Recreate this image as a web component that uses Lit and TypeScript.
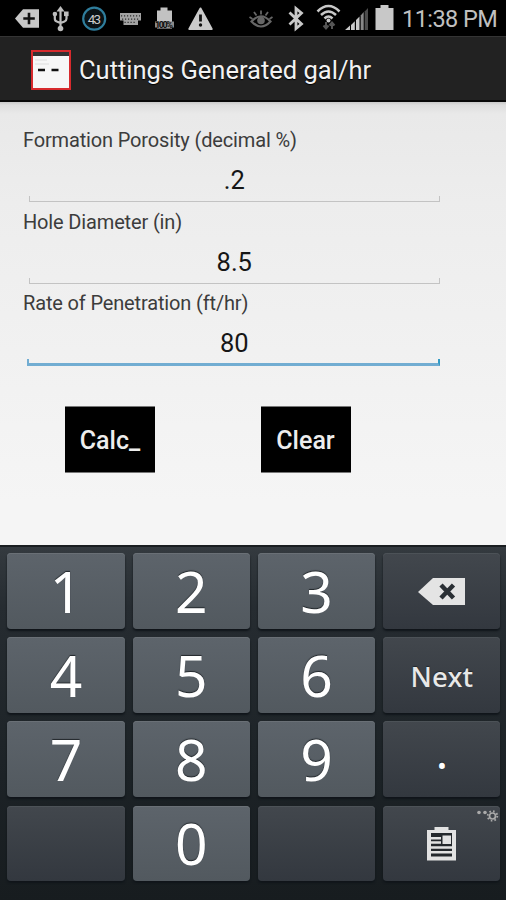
import { LitElement, html, svg, css, nothing } from "lit";
import { customElement, property } from "lit/decorators.js";

const shared = css`
  * { box-sizing: border-box; }
  svg { display: block; flex: none; overflow: visible; }
`;

@customElement("status-bar")
class StatusBar extends LitElement {
  static styles = [shared, css`
    :host { display: flex; height: 36px; background: #000; color: #c0c0c0; font-family: Roboto, "Liberation Sans", sans-serif; justify-content: space-between; padding: 2px 9px 0 15px; }
    .group { display: flex; }
    .left { gap: 14px; }
    .eye { margin-right: 15px; }
    .bluetooth { margin-right: 13px; }
    .wifi { margin-right: 4px; }
    .signal { margin-right: 6px; }
    .battery { margin-right: 8px; }
    .time { font-size: 23.5px; line-height: 34px; white-space: nowrap; width: 95px; letter-spacing: -0.55px; }
    .num { font: 13.5px Roboto, sans-serif; }
    .tiny { font: bold 9px Roboto, sans-serif; }
  `];
  render() {
    return html`
      <div class="group left">
        <svg width="24" height="32" viewBox="0 2 24 32" fill="#c8c8c8"><path d="M0 18.5 8 9.2H24V27.8H8Z"/><path d="M14 12.8v11.5M8.3 18.5h11.5" stroke="#111" stroke-width="2.6"/></svg>
        <svg width="16" height="32" viewBox="0 2 16 32" fill="none" stroke="#bdbdbd" stroke-width="2.2"><path d="M7.5 9v20M1.8 14v4.500q0 2.500 2 3l3.700 1.500 4-1.500q2-.8 2-3V14"/><path d="M7.500 6 11.500 11.500H3.500Z" fill="#bdbdbd" stroke="none"/><circle cx="7.500" cy="28.500" r="2.800" fill="#bdbdbd" stroke="none"/><circle cx="1.900" cy="14" r="2.300" fill="#bdbdbd" stroke="none"/><path d="M11 11.500h4.600v4.600H11z" fill="#bdbdbd" stroke="none"/></svg>
        <svg width="23" height="32" viewBox="0 2 23 32"><circle cx="11.200" cy="18.700" r="11" fill="#091114" stroke="#2f7d9c" stroke-width="2.200"/><text class="num" x="11.400" y="23.500" text-anchor="middle" textLength="13.500" fill="#c8c8c8">43</text></svg>
        <svg width="21" height="32" viewBox="0 2 21 32"><path d="M0 13h21v7.500h-3v4.500H3.500v-4.500H0z" fill="#a2a2a2"/><path d="M1 15.800h19M2 19.200h17M4.500 22.400h12" stroke="#2c2c2c" stroke-width="1.200" stroke-dasharray="1.200 1.800"/></svg>
        <svg width="19" height="32" viewBox="0 2 19 32"><path d="M5.500 7.500h7v3H17v18H2v-18h3.500z" fill="#c2c2c2"/><path d="M0 21.500h19v6H0z" fill="#8a8a8a"/><text class="tiny" x="0" y="27.800" textLength="18" fill="#111">100%</text></svg>
        <svg width="25" height="32" viewBox="0 2 25 32"><path d="M12.500 8.500 23.700 29H1.300Z" fill="#cacaca" stroke="#cacaca" stroke-width="2" stroke-linejoin="round"/><path d="M12.500 14.500v7" stroke="#111" stroke-width="2.800"/><circle cx="12.500" cy="25" r="1.700" fill="#111"/></svg>
      </div>
      <div class="group right">
        <svg class="eye" width="24" height="32" viewBox="0 2 24 32" fill="none" stroke="#666" stroke-width="2.200"><path d="M2.500 21.500Q12 11 21.500 21.500Q12 31.500 2.500 21.500Z"/><circle cx="12" cy="20.500" r="3.800" fill="#666" stroke="none"/><path d="M12 10.500v4M5 12l2.500 3.500M19 12l-2.500 3.500M.5 17l3 2M23.500 17l-3 2" stroke-width="1.800"/></svg>
        <svg class="bluetooth" width="16" height="32" viewBox="0 2 16 32" fill="none" stroke="#c8c8c8" stroke-width="2.800"><path d="M1.500 12.500 13.500 24 8 28.500V8.500L13.500 13 1.500 24.500"/></svg>
        <svg class="wifi" width="24" height="32" viewBox="0 2 24 32" fill="none" stroke="#c8c8c8" stroke-width="2.500"><path d="M.5 11.500q11-11 22 0M4 15q7.500-7 15 0M7.500 18.500q4-4 8 0"/><circle cx="11.500" cy="20.500" r="2" fill="#c8c8c8" stroke="none"/><path d="M9 22v6M6.500 25.500l2.500 3 2.500-3M15 29v-6M12.500 25.500l2.500-3 2.500 3" stroke="#555" stroke-width="2"/></svg>
        <svg class="signal" width="24" height="32" viewBox="0 2 24 32"><path d="M0 30 5 25.500V30zM6 25l3.800-3.800V30H6zM11 20l3.500-3.500V30H11z" fill="#c8c8c8"/><path d="M15.700 15.500 18.700 12V30h-3z" fill="#888"/><path d="M19.700 11.500l3.300-3.500V30h-3.300z" fill="#4c4c4c"/></svg>
        <svg class="battery" width="19" height="32" viewBox="0 2 19 32"><path d="M5.500 5h8v3H18.500V30H.500V8h5z" fill="#c8c8c8"/></svg>
        <span class="time">11:38 PM</span>
      </div>`;
  }
}

@customElement("form-field")
class FormField extends LitElement {
  @property() label = "";
  @property() value = "";
  @property({ type: Boolean, reflect: true }) active = false;
  static styles = [shared, css`
    :host { display: block; height: 81.7px; font-family: Roboto, "Liberation Sans", sans-serif; }
    .label { height: 28px; line-height: 28px; font-size: 20px; color: #3c3c3c; margin-left: -5.5px; letter-spacing: -0.15px; white-space: nowrap; }
    .box { height: 49px; text-align: center; line-height: 53px; font-size: 25.5px; color: #161616; display: flex; flex-direction: column; }
    .value { height: 42px; }
    .edge { height: 6px; border: 1.5px solid #c3c3c3; border-top: 0; }
    :host([active]) .edge { border: 2px solid #72add2; border-bottom-width: 3px; border-top: 0; border-right-color: #339bc5; height: 8px; margin: 0 0 0 -2px; }
  `];
  render() {
    return html`<div class="label">${this.label}</div>
      <div class="box"><div class="value">${this.value}</div><div class="edge"></div></div>`;
  }
}

const backspace = svg`<path d="M0 14 15 0H47V27H15Z" fill="#e4e4e4"/><path d="M23 7 35.5 20M35.5 7 23 20" stroke="#2b3035" stroke-width="4.5"/>`;
const clipboard = svg`<path d="M0 3H7.5V0H21.5V3H29V33.5H0Z" fill="#e2e2e2"/><path d="M4 6H25V29.5H4Z" fill="#24282c"/><path d="M4 11.3H14M4 15.5H14M4 20.5H25M4 25.3H25" stroke="#e2e2e2" stroke-width="2.6"/><path d="M15.5 8.5H24V17H15.5Z" fill="#e2e2e2"/>`;

@customElement("pad-key")
class PadKey extends LitElement {
  @property() label = "";
  @property({ reflect: true }) kind = "digit";
  static styles = [shared, css`
    :host { display: flex; align-items: center; justify-content: center; position: relative; border-radius: 4px; color: #fff; background: linear-gradient(#5d646b, #52595f); box-shadow: 0 2px 2px #10151a, inset 0 1px 0 #6a7076; font-family: "Noto Sans", sans-serif; font-size: 57px; line-height: 75px; text-shadow: 0 -1px 1px #22272b; }
    :host(:not([kind="digit"])) { background: linear-gradient(#42474d, #33383f); box-shadow: 0 2px 2px #10151a, inset 0 1px 0 #4c5257; }
    .digit { padding-top: 1px; }
    .next { font-size: 27.5px; color: #e8e8e8; font-weight: 500; letter-spacing: .1px; padding-top: 3px; }
    .dot { font-size: 46px; line-height: 58px; padding-bottom: 17px; }
    .bs { margin: 2px 0 0 -1px; }
    .clip { margin-top: 2px; }
    .corner { position: absolute; right: 2px; top: 4px; }
  `];
  render() {
    if (this.kind === "backspace") return html`<svg class="bs" width="47" height="27">${backspace}</svg>`;
    if (this.kind === "clip") return html`<svg class="clip" width="29" height="34">${clipboard}</svg>
      <svg class="corner" width="21" height="12"><g fill="#aaa"><circle cx="2" cy="2.5" r="1.8"/><circle cx="8" cy="2.5" r="1.8"/></g><circle cx="15.5" cy="6" r="3" fill="none" stroke="#aaa" stroke-width="1.7"/><circle cx="15.5" cy="6" r="4.8" fill="none" stroke="#aaa" stroke-width="1.8" stroke-dasharray="1.6 2.17"/></svg>`;
    return this.label ? html`<span class=${this.kind}>${this.label}</span>` : nothing;
  }
}

const keys: [string, string][] = [
  ["1", "digit"], ["2", "digit"], ["3", "digit"], ["", "backspace"],
  ["4", "digit"], ["5", "digit"], ["6", "digit"], ["Next", "next"],
  ["7", "digit"], ["8", "digit"], ["9", "digit"], [".", "dot"],
  ["", "blank"], ["0", "digit"], ["", "blank"], ["", "clip"],
];

@customElement("app-root")
class AppRoot extends LitElement {
  static styles = [shared, css`
    :host { display: flex; flex-direction: column; width: 506px; height: 900px; overflow: hidden; font-family: Roboto, "Liberation Sans", sans-serif; }
    .bar { height: 66px; background: #222; border-top: 1px solid #343434; border-bottom: 2px solid #090909; display: flex; align-items: center; padding: 3px 0 0 31px; gap: 8px; color: #f2f2f2; font-size: 25.5px; white-space: nowrap; flex: none; }
    .title { text-shadow: 0 1px 1px #000; }
    .content { height: 443px; flex: none; background: linear-gradient(#c9c9c9 0, #dedede 3px, #e9e9e9 12px, #ededed 100px, #f5f5f5 400px); padding: 24px 66px 0 28.5px; }
    .actions { display: flex; gap: 105.5px; padding: 34.5px 0 0 36.5px; }
    .btn { flex: none; width: 90px; height: 67px; background: #000; color: #ededed; font: 500 25px Roboto, sans-serif; border: 0; border-top: 1px solid #777; border-bottom: 1px solid #777; padding: 2px 0 0; text-align: center; }
    .pad { flex: 1; background: linear-gradient(#343a3f 0, #262c31 60px, #1c2226 230px, #171c1f); border-top: 2px solid #1a1e21; display: grid; grid-template-columns: repeat(4, 117.3px); grid-auto-rows: 75.5px; gap: 8.7px 8px; padding: 6px 0 0 7.3px; }
  `];
  render() {
    return html`
      <status-bar></status-bar>
      <header class="bar">
        <svg width="40" height="40"><rect x="1" y="1" width="38" height="38" fill="#f7f7f7" stroke="#d72a2d" stroke-width="2"/><path d="M2 2h36v4H2z" fill="#333"/><path d="M4 10h12M4 14h14" stroke="#ddd" stroke-width="1"/><path d="M7 20h7M20.5 20h7" stroke="#111" stroke-width="2.6"/></svg>
        <span class="title">Cuttings Generated gal/hr</span>
      </header>
      <main class="content">
        <form-field label="Formation Porosity (decimal %)" value=".2"></form-field>
        <form-field label="Hole Diameter (in)" value="8.5"></form-field>
        <form-field label="Rate of Penetration (ft/hr)" value="80" active></form-field>
        <div class="actions"><button class="btn">Calc_</button><button class="btn">Clear</button></div>
      </main>
      <section class="pad">${keys.map(([l, k]) => html`<pad-key label=${l} kind=${k}></pad-key>`)}</section>`;
  }
}
